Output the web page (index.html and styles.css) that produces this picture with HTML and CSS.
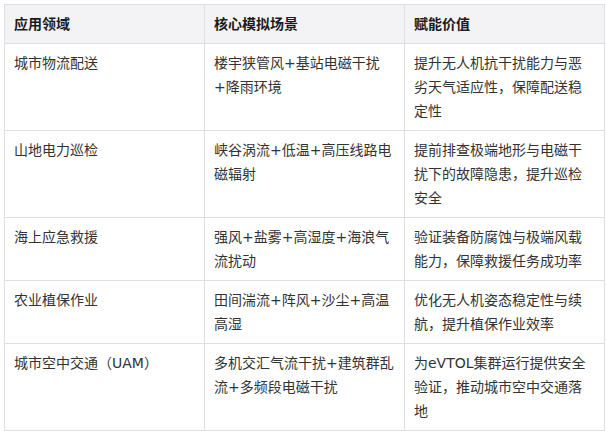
FILE: index.html
```html
<!DOCTYPE html>
<html lang="zh-CN">
<head>
<meta charset="utf-8">
<link rel="stylesheet" href="styles.css">
</head>
<body>
<table class="grid">
  <colgroup><col class="c"><col class="c"><col class="c"></colgroup>
  <thead>
    <tr><th>应用领域</th><th>核心模拟场景</th><th>赋能价值</th></tr>
  </thead>
  <tbody>
    <tr><td>城市物流配送</td><td>楼宇狭管风+基站电磁干扰+降雨环境</td><td>提升无人机抗干扰能力与恶劣天气适应性，保障配送稳定性</td></tr>
    <tr><td>山地电力巡检</td><td>峡谷涡流+低温+高压线路电磁辐射</td><td>提前排查极端地形与电磁干扰下的故障隐患，提升巡检安全</td></tr>
    <tr><td>海上应急救援</td><td>强风+盐雾+高湿度+海浪气流扰动</td><td>验证装备防腐蚀与极端风载能力，保障救援任务成功率</td></tr>
    <tr><td>农业植保作业</td><td>田间湍流+阵风+沙尘+高温高湿</td><td>优化无人机姿态稳定性与续航，提升植保作业效率</td></tr>
    <tr><td>城市空中交通（UAM）</td><td>多机交汇气流干扰+建筑群乱流+多频段电磁干扰</td><td>为eVTOL集群运行提供安全验证，推动城市空中交通落地</td></tr>
  </tbody>
</table>
</body>
</html>
```

FILE: styles.css
```css
html, body {
  margin: 0;
  padding: 0;
  background: #ffffff;
}
body {
  padding: 4px 0 0 4px;
  font-family: "DejaVu Sans", "Noto Sans CJK SC", sans-serif;
  font-size: 14px;
  line-height: 24px;
  color: #333333;
}
.grid {
  border-collapse: collapse;
  table-layout: fixed;
  width: 600px;
}
.grid .c {
  width: 200px;
}
.grid th,
.grid td {
  border: 1px solid #dfdfe1;
  padding: 7px 9px;
  text-align: left;
  vertical-align: top;
}
.grid th {
  background: #f3f3f5;
  font-weight: 700;
  color: #1b1b1b;
}
```
